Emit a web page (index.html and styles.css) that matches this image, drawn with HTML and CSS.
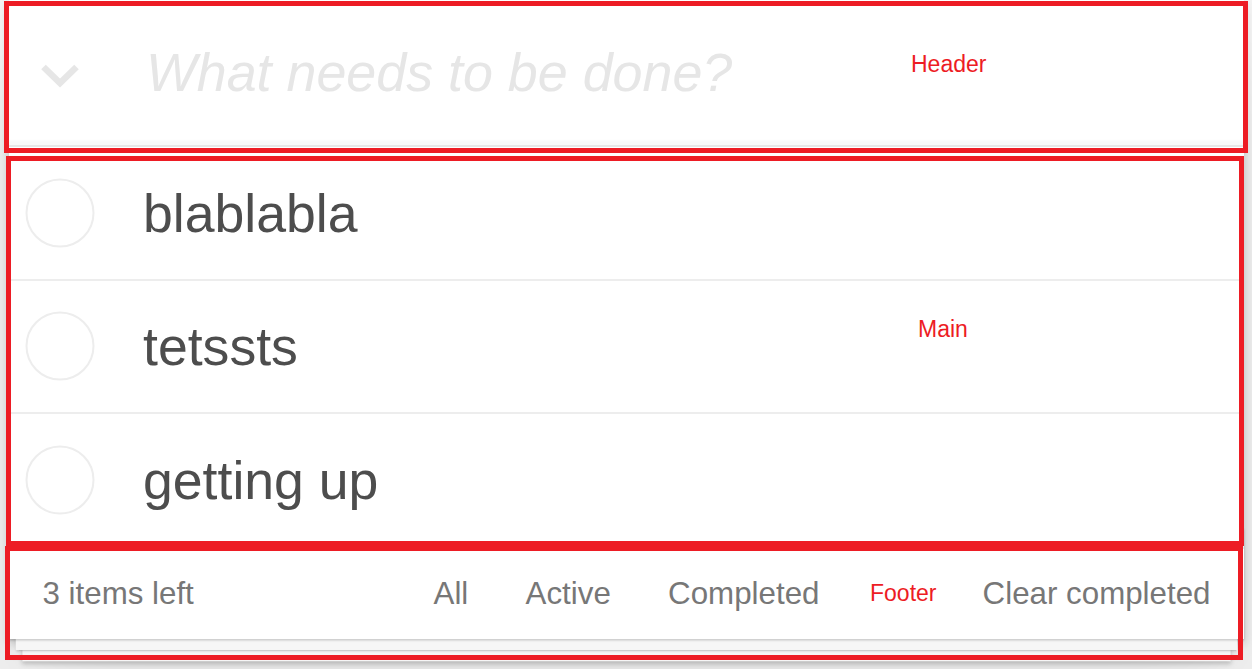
FILE: index.html
```html
<!DOCTYPE html>
<html lang="en">
<head>
<meta charset="utf-8">
<title>todos</title>
<link rel="stylesheet" href="styles.css">
</head>
<body>
<section class="todoapp">
  <header class="header">
    <svg class="toggle-all" width="40" height="26" viewBox="0 0 40 26">
      <polyline points="3.5,4 20,20 36.5,4" fill="none" stroke="#e6e6e6" stroke-width="6.5" stroke-linejoin="miter" stroke-linecap="butt"/>
    </svg>
    <div class="new-todo">What needs to be done?</div>
  </header>
  <section class="main">
    <ul class="todo-list">
      <li class="todo">
        <svg class="toggle" width="70" height="70" viewBox="0 0 70 70"><circle cx="35" cy="35" r="33.5" fill="none" stroke="#ededed" stroke-width="2"/></svg>
        <label class="todo-label">blablabla</label>
      </li>
      <li class="todo">
        <svg class="toggle" width="70" height="70" viewBox="0 0 70 70"><circle cx="35" cy="35" r="33.5" fill="none" stroke="#ededed" stroke-width="2"/></svg>
        <label class="todo-label">tetssts</label>
      </li>
      <li class="todo">
        <svg class="toggle" width="70" height="70" viewBox="0 0 70 70"><circle cx="35" cy="35" r="33.5" fill="none" stroke="#ededed" stroke-width="2"/></svg>
        <label class="todo-label">getting up</label>
      </li>
    </ul>
  </section>
  <footer class="footer">
    <span class="todo-count">3 items left</span>
    <ul class="filters">
      <li class="filter"><a class="filter-link">All</a></li>
      <li class="filter"><a class="filter-link">Active</a></li>
      <li class="filter"><a class="filter-link">Completed</a></li>
    </ul>
    <button class="clear-completed">Clear completed</button>
  </footer>
</section>

<div class="annot annot-header"></div>
<div class="annot annot-main"></div>
<div class="annot annot-footer"></div>
<span class="annot-label label-header">Header</span>
<span class="annot-label label-main">Main</span>
<span class="annot-label label-footer">Footer</span>
</body>
</html>
```

FILE: styles.css
```css
html, body {
  margin: 0;
  padding: 0;
}

body {
  background: #f5f5f5;
  font-family: "Liberation Sans", Arial, Helvetica, sans-serif;
  color: #4d4d4d;
  overflow: hidden;
  height: 669px;
}

.todoapp {
  position: relative;
  background: #fff;
  margin: -1px 0 0 9px;
  width: 1235px;
  box-shadow: 0 4.5px 9px 0 rgba(0, 0, 0, 0.2), 0 56px 112px 0 rgba(0, 0, 0, 0.1);
}

/* header */
.header {
  display: flex;
  align-items: flex-start;
  box-shadow: inset 0 -4.5px 2.2px rgba(0, 0, 0, 0.03);
}

.toggle-all {
  flex-shrink: 0;
  margin: 64px 0 0 31px;
}

.new-todo {
  flex: 1;
  padding: 35.7px 35.7px 35.7px 66px;
  font-size: 53.8px;
  line-height: 75px;
  font-style: italic;
  color: #e6e6e6;
  white-space: nowrap;
}

/* main */
.main {
  border-top: 2.2px solid #e6e6e6;
}

.todo-list {
  margin: 0;
  padding: 0;
  list-style: none;
}

.todo {
  display: flex;
  align-items: center;
  border-bottom: 2.2px solid #ededed;
}

.toggle {
  flex-shrink: 0;
  margin-left: 15.5px;
}

.todo-label {
  flex: 1;
  padding: 33.5px 33.5px 33.5px 48.5px;
  font-size: 53.6px;
  line-height: 1.2;
  color: #4d4d4d;
}

/* footer */
.footer {
  position: relative;
  display: grid;
  grid-template-columns: 1fr auto 1fr;
  align-items: start;
  height: 44.7px;
  padding: 22.3px 33.5px;
  border-top: 2.2px solid #e6e6e6;
  color: #777;
  font-size: 31.3px;
  line-height: 43.8px;
}

.footer::before {
  content: "";
  position: absolute;
  left: 0;
  right: 0;
  bottom: 0;
  height: 111.6px;
  overflow: hidden;
  box-shadow:
    0 2.2px 2.2px rgba(0, 0, 0, 0.2),
    0 17.9px 0 -6.7px #f6f6f6,
    0 20.1px 2.2px -6.7px rgba(0, 0, 0, 0.2),
    0 35.7px 0 -13.4px #f6f6f6,
    0 38px 4.5px -13.4px rgba(0, 0, 0, 0.2);
}

.todo-count {
  justify-self: start;
  white-space: nowrap;
}

.filters {
  margin: 0;
  padding: 0;
  list-style: none;
  white-space: nowrap;
}

.filter {
  display: inline;
}

.filter-link {
  margin: 0 6.7px;
  padding: 6.7px 15.6px;
  border: 2.2px solid transparent;
  border-radius: 6.7px;
  color: inherit;
}

.clear-completed {
  justify-self: end;
  margin: 0;
  padding: 0;
  border: 0;
  background: none;
  font: inherit;
  line-height: 44.7px;
  color: inherit;
  white-space: nowrap;
}

/* annotation overlays */
.annot {
  position: absolute;
  box-sizing: border-box;
  border: 5px solid #ed1c24;
}

.annot-header {
  left: 4px;
  top: 1px;
  width: 1244px;
  height: 152px;
}

.annot-main {
  left: 6px;
  top: 156px;
  width: 1238px;
  height: 390px;
}

.annot-footer {
  left: 5px;
  top: 546px;
  width: 1238px;
  height: 114px;
}

.annot-label {
  position: absolute;
  font-family: "Liberation Sans", Arial, sans-serif;
  font-size: 23px;
  line-height: 23px;
  color: #ed1c24;
}

.label-header {
  left: 911px;
  top: 53px;
}

.label-main {
  left: 918px;
  top: 318px;
}

.label-footer {
  left: 870px;
  top: 582px;
}
```
